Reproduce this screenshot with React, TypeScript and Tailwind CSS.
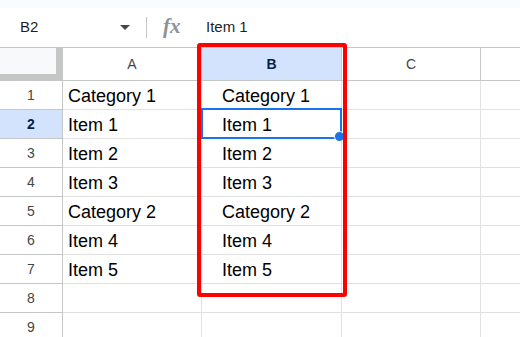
const rows = [
  { n: 1, a: "Category 1", b: "Category 1" },
  { n: 2, a: "Item 1", b: "Item 1" },
  { n: 3, a: "Item 2", b: "Item 2" },
  { n: 4, a: "Item 3", b: "Item 3" },
  { n: 5, a: "Category 2", b: "Category 2" },
  { n: 6, a: "Item 4", b: "Item 4" },
  { n: 7, a: "Item 5", b: "Item 5" },
  { n: 8, a: "", b: "" },
  { n: 9, a: "", b: "" },
];

const App = () => {
  return (
    <div className="relative w-[520px] h-[337px] overflow-hidden bg-white font-['Liberation_Sans',Arial,sans-serif]">
      {/* top strip */}
      <div className="h-[8px] bg-[#f9fbfd]" />

      {/* formula bar */}
      <div className="h-[40px] flex items-center border-b border-[#c4c7c5] text-[15px] text-[#1f1f1f]">
        <div className="w-[112px] pl-[20px]">B2</div>
        <div className="w-[26px] flex justify-center">
          <div className="w-0 h-0 border-l-[5px] border-r-[5px] border-t-[5px] border-l-transparent border-r-transparent border-t-[#444746]" />
        </div>
        <div className="w-px h-[21px] bg-[#c4c7c5] ml-[8px]" />
        <div className="ml-[16px] w-[28px] text-[21px] italic font-bold text-[#8e9195] font-['Liberation_Serif',serif] leading-none -mt-[2px]">
          fx
        </div>
        <div className="ml-[15px]">Item 1</div>
      </div>

      {/* column header */}
      <div className="flex h-[33px] border-b border-[#c4c7c5] text-[14px] text-[#444746]">
        <div className="w-[63px] border-r border-[#c4c7c5] bg-[#f8f9fa] flex">
          <div className="flex-1 border-r-[6px] border-b-[6px] border-[#c4c7c5]" />
        </div>
        <div className="w-[139px] border-r border-[#c4c7c5] flex items-center justify-center">A</div>
        <div className="w-[140px] border-r border-[#c4c7c5] bg-[#d3e3fd] flex items-center justify-center font-bold text-[#041e49]">
          B
        </div>
        <div className="w-[139px] border-r border-[#c4c7c5] flex items-center justify-center">C</div>
        <div className="flex-1" />
      </div>

      {/* rows */}
      {rows.map((r) => (
        <div key={r.n} className="flex h-[29px] text-[18px] text-black">
          <div
            className={`w-[63px] border-r border-b border-[#c4c7c5] flex items-center justify-center text-[14px] ${
              r.n === 2 ? "bg-[#d3e3fd] font-bold text-[#041e49]" : "text-[#444746]"
            }`}
          >
            {r.n}
          </div>
          <div className="w-[139px] border-r border-b border-[#e1e1e1] flex items-center pl-[5px] pt-[3px]">{r.a}</div>
          <div className="w-[140px] border-r border-b border-[#e1e1e1] flex items-center pl-[20px] pt-[3px]">{r.b}</div>
          <div className="w-[139px] border-r border-b border-[#e1e1e1]" />
          <div className="flex-1 border-b border-[#e1e1e1]" />
        </div>
      ))}

      {/* active cell B2 */}
      <div className="absolute left-[201px] top-[108px] w-[141px] h-[31px] border-2 border-[#1a73e8]" />
      <div className="absolute left-[334px] top-[131px] w-[11px] h-[11px] rounded-full bg-[#1a73e8] border border-white" />

      {/* red highlight */}
      <div className="absolute left-[197px] top-[43px] w-[150px] h-[254px] border-4 border-[#ff0000] rounded-[3px]" />
    </div>
  );
};

export default App;
